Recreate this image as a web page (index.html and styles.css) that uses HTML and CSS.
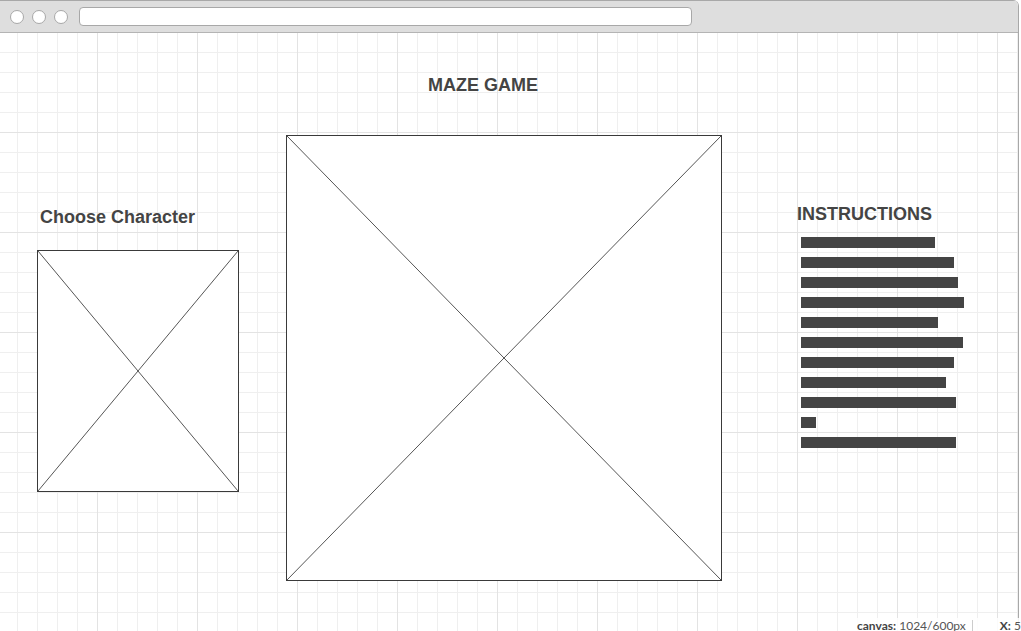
FILE: index.html
```html
<!DOCTYPE html>
<html lang="en">
<head>
    <meta charset="UTF-8">
    <meta name="viewport" content="width=device-width, initial-scale=1.0">
    <title>Maze Game</title>
    <link rel="stylesheet" href="styles.css">
</head>
<body>
    <div class="window">
        <div class="chrome">
            <span class="dot"></span>
            <span class="dot"></span>
            <span class="dot"></span>
            <div class="address"></div>
        </div>
        <div class="canvas">
            <h1 class="title">MAZE GAME</h1>
            <div class="board">
                <div class="side-left">
                    <h2 class="heading">Choose Character</h2>
                    <div class="placeholder character">
                        <svg viewBox="0 0 100 100" preserveAspectRatio="none">
                            <line x1="0" y1="0" x2="100" y2="100" vector-effect="non-scaling-stroke"/>
                            <line x1="100" y1="0" x2="0" y2="100" vector-effect="non-scaling-stroke"/>
                        </svg>
                    </div>
                </div>
                <div class="placeholder stage">
                    <svg viewBox="0 0 100 100" preserveAspectRatio="none">
                        <line x1="0" y1="0" x2="100" y2="100" vector-effect="non-scaling-stroke"/>
                        <line x1="100" y1="0" x2="0" y2="100" vector-effect="non-scaling-stroke"/>
                    </svg>
                </div>
                <div class="side-right">
                    <h2 class="heading">INSTRUCTIONS</h2>
                    <ul class="lines">
                        <li style="width: 134px"></li>
                        <li style="width: 153px"></li>
                        <li style="width: 157px"></li>
                        <li style="width: 163px"></li>
                        <li style="width: 137px"></li>
                        <li style="width: 162px"></li>
                        <li style="width: 153px"></li>
                        <li style="width: 145px"></li>
                        <li style="width: 155px"></li>
                        <li style="width: 15px"></li>
                        <li style="width: 155px"></li>
                    </ul>
                </div>
            </div>
        </div>
    </div>
    <div class="status">
        <span><b>canvas:</b> 1024/600px</span>
        <span class="sep"></span>
        <span><b>X:</b> 5</span>
    </div>
</body>
</html>
```

FILE: styles.css
```css
html, body {
    margin: 0;
    padding: 0;
    background: #fff;
}
body {
    position: relative;
    width: 1021px;
    height: 631px;
    overflow: hidden;
    font-family: "Liberation Sans", Arial, sans-serif;
    color: #444;
}
.window {
    width: 1018px;
    height: 631px;
    border-right: 1px solid #a8a8a8;
    border-top-right-radius: 6px;
    overflow: hidden;
}
.chrome {
    height: 31px;
    background: #dedede;
    border-top: 1px solid #a8a8a8;
    border-bottom: 1px solid #b4b4b4;
    display: flex;
    align-items: center;
    padding-left: 10px;
}
.dot {
    width: 12px;
    height: 12px;
    border: 1px solid #a8a8a8;
    border-radius: 50%;
    background: #fff;
    margin-right: 8px;
}
.address {
    margin-left: 3px;
    width: 611px;
    height: 17px;
    background: #fff;
    border: 1px solid #a8a8a8;
    border-radius: 4px;
}
.canvas {
    height: 598px;
    padding-top: 41px;
    box-sizing: border-box;
    background-color: #fff;
    background-image:
        linear-gradient(to right, #e3e3e3 1px, transparent 1px),
        linear-gradient(to bottom, #e3e3e3 1px, transparent 1px),
        linear-gradient(to right, #efefef 1px, transparent 1px),
        linear-gradient(to bottom, #efefef 1px, transparent 1px);
    background-size: 100px 100px, 100px 100px, 20px 20px, 20px 20px;
    background-position: -3px -1px;
}
.title {
    margin: 0 0 0 428px;
    font-size: 18px;
    line-height: 22px;
    font-weight: bold;
}
.board {
    display: flex;
    align-items: flex-start;
    margin-top: 39px;
}
.heading {
    margin: 0;
    font-size: 18px;
    line-height: 22px;
    font-weight: bold;
}
.side-left {
    margin-left: 37px;
    margin-top: 71px;
}
.side-left .heading {
    margin-left: 3px;
    margin-bottom: 22px;
}
.placeholder {
    box-sizing: border-box;
    border: 1px solid #3a3a3a;
    background: #fff;
}
.placeholder svg {
    display: block;
    width: 100%;
    height: 100%;
}
.placeholder line {
    stroke: #555;
    stroke-width: 1;
}
.character {
    width: 202px;
    height: 242px;
}
.stage {
    margin-left: 47px;
    width: 436px;
    height: 446px;
}
.side-right {
    margin-left: 75px;
    margin-top: 68px;
}
.lines {
    list-style: none;
    margin: 12px 0 0 4px;
    padding: 0;
}
.lines li {
    height: 11px;
    background: #444;
    margin-bottom: 9px;
}
.status {
    position: absolute;
    left: 850px;
    top: 618px;
    width: 171px;
    height: 16px;
    display: flex;
    align-items: center;
    padding-left: 7px;
    box-sizing: border-box;
    background: rgba(255, 255, 255, 0.85);
    font-family: Lato, "Liberation Sans", sans-serif;
    font-size: 12px;
    line-height: 16px;
    color: #555;
    white-space: nowrap;
}
.status b {
    color: #444;
}
.sep {
    width: 1px;
    height: 13px;
    background: #ccc;
    margin: 0 27px 0 6px;
}
```
